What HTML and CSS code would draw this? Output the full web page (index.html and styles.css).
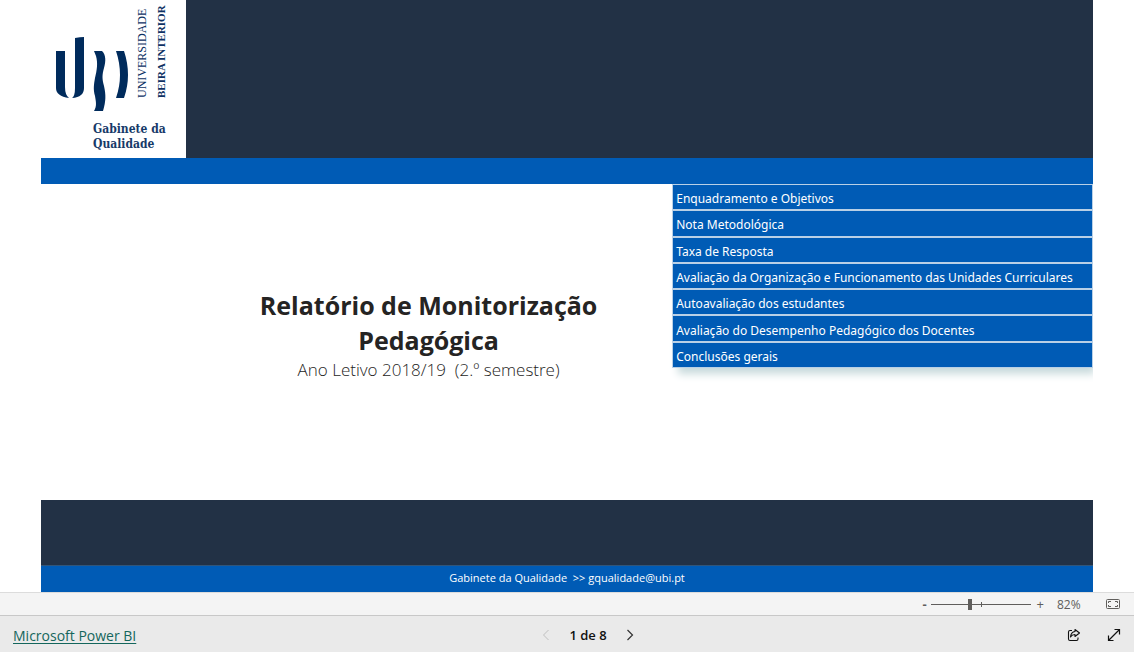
FILE: index.html
```
<!DOCTYPE html>
<html lang="pt">
<head>
<meta charset="utf-8">
<meta name="viewport" content="width=device-width, initial-scale=1">
<title>Relatório de Monitorização Pedagógica</title>
<link rel="stylesheet" href="styles.css">
</head>
<body>
<main class="report">
  <header class="banner">
    <svg class="logo" viewBox="0 0 145 158" role="img" aria-label="Universidade Beira Interior, Gabinete da Qualidade">
      <g fill="#002b5c">
        <path d="M15 51H24V87Q24 95 28 98Q15 96 15 88Z"/>
        <path d="M34 38Q39 37 43 37V88Q43 97 31 98Q34 96 34 88Z"/>
        <path d="M53 51H61C65 55 65 61 63 68C61 75 61 79 63 86C65 95 65 101 62 111H53C56 106 55 102 54 96C52 89 53 84 54 78C56 70 57 63 55 56Z"/>
        <path d="M75 51H83Q91 75 83 98H75Q83 75 75 51Z"/>
      </g>
      <g class="logo-name">
        <text transform="translate(105 98) rotate(-90)">UNIVERSIDADE</text>
        <text class="logo-strong" transform="translate(124 98) rotate(-90)">BEIRA INTERIOR</text>
      </g>
      <g class="logo-office">
        <text x="52" y="133">Gabinete da</text>
        <text x="52" y="148">Qualidade</text>
      </g>
    </svg>
  </header>
  <div class="stripe"></div>
  <section class="cover">
    <div class="heading">
      <h1>Relatório de Monitorização Pedagógica</h1>
      <p>Ano Letivo 2018/19 &nbsp;(2.º semestre)</p>
    </div>
    <nav class="menu" aria-label="Secções">
      <a href="#enquadramento">Enquadramento e Objetivos</a>
      <a href="#nota">Nota Metodológica</a>
      <a href="#taxa">Taxa de Resposta</a>
      <a href="#organizacao">Avaliação da Organização e Funcionamento das Unidades Curriculares</a>
      <a href="#autoavaliacao">Autoavaliação dos estudantes</a>
      <a href="#desempenho">Avaliação do Desempenho Pedagógico dos Docentes</a>
      <a href="#conclusoes">Conclusões gerais</a>
    </nav>
  </section>
  <div class="base"></div>
  <footer class="contact">Gabinete da Qualidade &nbsp;&gt;&gt; gqualidade@ubi.pt</footer>
</main>
<div class="zoom-bar">
  <button type="button" class="minus" aria-label="Reduzir">-</button>
  <input class="zoom-range" type="range" min="10" max="195" value="82" aria-label="Zoom">
  <button type="button" aria-label="Ampliar">+</button>
  <output class="zoom-value">82%</output>
  <button type="button" class="fit" aria-label="Ajustar à página">
    <svg width="14" height="12" viewBox="0 0 14 12" fill="none" stroke="#605e5c"><rect x=".5" y="1.5" width="13" height="9" rx="1"/><path d="M5 3.5H2.5V5M2.5 7V8.500H5M9 3.500H11.500V5M11.500 7V8.500H9"/></svg>
  </button>
</div>
<div class="status-bar">
  <a class="brand" href="#powerbi">Microsoft Power BI</a>
  <div class="pager">
    <button type="button" aria-label="Página anterior" disabled><svg width="8" height="12" viewBox="0 0 8 12" fill="none" stroke="#c0c0c0"><path d="M6.500 1L1.500 6L6.500 11"/></svg></button>
    <span>1 de 8</span>
    <button type="button" aria-label="Página seguinte"><svg width="8" height="12" viewBox="0 0 8 12" fill="none" stroke="#333" stroke-width="1.200"><path d="M1.500 1L6.500 6L1.500 11"/></svg></button>
  </div>
  <div class="actions">
    <button type="button" aria-label="Partilhar"><svg width="14" height="14" viewBox="0 0 14 14" fill="none" stroke="#111" stroke-width="1.100"><path d="M5 2.500H3Q1.500 2.500 1.500 4V11Q1.500 12.500 3 12.500H9.500Q11 12.500 11 11V9.500"/><path d="M8 1.500L12.500 5L8 8.500V6.500Q5 6.500 3.500 9Q4 4 8 3.500Z" stroke-linejoin="round"/></svg></button>
    <button type="button" aria-label="Ecrã inteiro"><svg width="14" height="14" viewBox="0 0 14 14" fill="none" stroke="#111" stroke-width="1.200"><path d="M1.500 12.500L12.500 1.500M7.500 1.500H12.500V6.500M1.500 7.500V12.500H6.500"/></svg></button>
  </div>
</div>
</body>
</html>
```
FILE: styles.css
```
* { box-sizing: border-box; }
body {
  margin: 0;
  min-height: 100vh;
  display: flex;
  flex-direction: column;
  background: #fff;
  color: #252423;
  font-family: "Segoe UI", "Open Sans", sans-serif;
  font-size: 13px;
}
button {
  display: flex;
  align-items: center;
  justify-content: center;
  padding: 0;
  border: 0;
  background: none;
  color: #605e5c;
  font: inherit;
}
.report {
  flex: 1;
  display: flex;
  flex-direction: column;
  margin: 0 41px;
}
.banner { display: flex; background: #223145; }
.logo { width: 145px; height: 158px; background: #fff; }
.logo-name { font: 12px "Liberation Serif", serif; fill: #0d3163; }
.logo-strong { font-weight: bold; font-size: 11px; }
.logo-office { font: bold 12px "DejaVu Serif Condensed", "DejaVu Serif", serif; fill: #173a69; }
.stripe { height: 26px; background: #005bb5; }
.cover { flex: 1; display: flex; align-items: flex-start; }
.heading {
  flex: 1;
  padding: 104px 68px 0 212px;
  text-align: center;
}
h1 { margin: 0; font-size: 25px; line-height: 35px; font-weight: 700; }
.heading p { margin: 0; font-size: 17px; line-height: 24px; font-weight: 300; }
.menu {
  flex: none;
  width: 40%;
  display: grid;
  grid-auto-rows: 1fr;
  min-height: 184px;
  box-shadow: 4px 8px 8px -2px #c8dadc;
  clip-path: inset(0 0 -20px -4px);
}
.menu a {
  display: flex;
  align-items: center;
  padding: 4px 3px 0;
  border: 1px solid #b9d0e6;
  background: #005bb5;
  color: #fff;
  font-family: "Segoe UI", "Noto Sans", sans-serif;
  font-size: 12px;
  line-height: 16px;
  text-decoration: none;
  white-space: nowrap;
}
.base { height: 65px; background: #223145; }
.contact {
  height: 27px;
  border-top: 1px solid #315579;
  background: #005bb5;
  color: #fff;
  font-size: 11px;
  line-height: 24px;
  text-align: center;
}
.zoom-bar {
  display: flex;
  align-items: center;
  justify-content: flex-end;
  height: 23px;
  padding-right: 14px;
  border-top: 1px solid #dcdcdc;
  background: #f4f4f4;
  color: #605e5c;
}
.minus { font-weight: 700; }
.zoom-range {
  appearance: none;
  width: 100px;
  height: 12px;
  margin: 0 6px 0 4px;
  background:
    linear-gradient(#605e5c, #605e5c) 50px center / 1px 5px no-repeat,
    linear-gradient(#605e5c, #605e5c) center / 100% 1px no-repeat;
}
.zoom-range::-webkit-slider-thumb {
  appearance: none;
  width: 4px;
  height: 11px;
  background: #605e5c;
}
.zoom-value { width: 24px; margin: 0 25px 0 13px; font-size: 12px; }
.status-bar {
  display: grid;
  grid-template-columns: 1fr auto 1fr;
  align-items: center;
  height: 37px;
  padding: 2px 13px 0;
  border-top: 1px solid #c8c8c8;
  background: #eaeaea;
}
.brand { justify-self: start; color: #14665c; font-size: 14px; text-underline-offset: 2px; }
.pager { display: flex; align-items: center; gap: 19px; padding-left: 42px; color: #111; font-weight: 600; }
.actions { display: flex; justify-content: flex-end; gap: 26px; }
```
